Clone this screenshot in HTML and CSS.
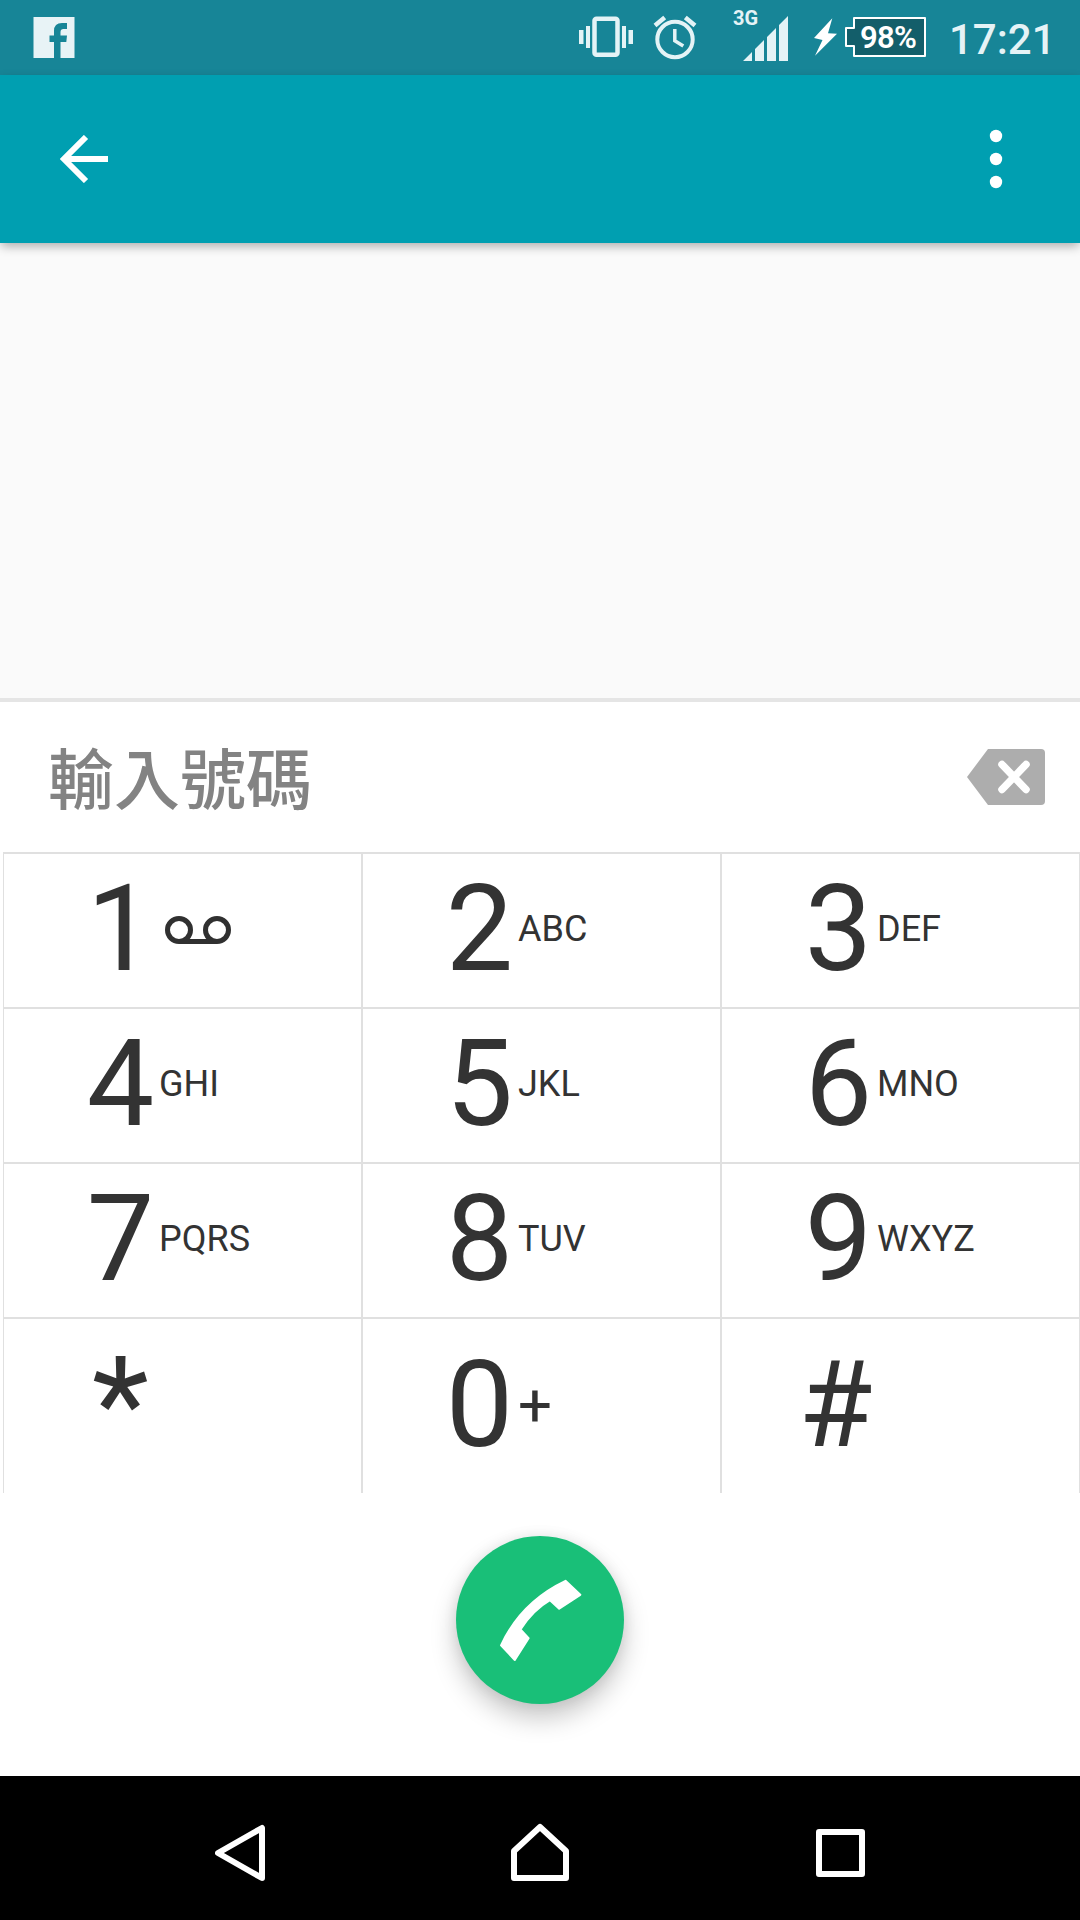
FILE: index.html
```html
<!DOCTYPE html>
<html lang="zh-Hant">
<head>
<meta charset="UTF-8">
<title>Dialer</title>
<link rel="stylesheet" href="styles.css">
</head>
<body>

<div class="statusbar">
  <svg class="facebook" width="42" height="75" viewBox="33 0 42 75">
    <path fill="#e8f3f6" d="M33.5 17H74.500V58H60.500V42H66.300L67 35.500H60.500V32Q60.500 29 63.500 29H67V23H62Q54 23 54 31V35.500H49.500V42H54V58H33.500Z"/>
  </svg>
  <svg class="vibrate" width="54" height="75" viewBox="579 0 54 75" fill="#e4f3f6">
    <rect x="579" y="30" width="4.500" height="14"/>
    <rect x="586" y="26" width="4" height="22"/>
    <rect x="594.500" y="18.800" width="23" height="36" rx="2" fill="none" stroke="#e4f3f6" stroke-width="4.500"/>
    <rect x="622" y="26" width="4" height="22"/>
    <rect x="628.500" y="30" width="4.500" height="14"/>
  </svg>
  <svg class="alarm" width="44" height="75" viewBox="653 0 44 75" fill="none" stroke="#e4f3f6" stroke-width="4">
    <circle cx="675" cy="39.500" r="17.700"/>
    <path d="M674.800 29V40.700L683.300 46" stroke-width="3.500"/>
    <path d="M655 25.500L664.700 17.500M695 25.500L685.300 17.500" stroke-width="4.500"/>
  </svg>
  <div class="network">3G</div>
  <svg class="signal" width="45" height="75" viewBox="743 0 45 75" fill="#e4f3f6">
    <path d="M743 61L752 52V61ZM755 61V49L764 40V61ZM767 61V37L776 28V61ZM779 61V25L788 16V61Z"/>
  </svg>
  <svg class="bolt" width="24" height="75" viewBox="814 0 24 75" fill="#fff">
    <path d="M832.300 18.300L814 38L822.500 40L815 55.800L837 33.800L828 33.300Z"/>
  </svg>
  <div class="battery">
    <svg width="82" height="75" viewBox="845 0 82 75">
      <path d="M854 18H925V56H854V46H846V28H854Z" fill="#135e6a" stroke="#fff" stroke-width="2" stroke-linejoin="round"/>
    </svg>
    <span class="percent">98%</span>
  </div>
  <div class="clock">17:21</div>
</div>

<div class="toolbar">
  <svg width="48" height="48" viewBox="0 0 48 48" fill="none" stroke="#fff" stroke-width="6">
    <path d="M26 2L4 24L26 46M4 24H48"/>
  </svg>
  <svg width="14" height="60" viewBox="0 0 14 60" fill="#fff">
    <circle cx="7" cy="7" r="6.200"/>
    <circle cx="7" cy="30" r="6.200"/>
    <circle cx="7" cy="53" r="6.200"/>
  </svg>
</div>

<div class="results"></div>

<div class="number">
  <span class="hint">輸入號碼</span>
  <svg width="78" height="56" viewBox="0 0 78 56">
    <path fill="#adadad" d="M21 0H74Q78 0 78 4V52Q78 56 74 56H21L0 28Z"/>
    <path d="M35 15.500L59 40.500M59 15.500L35 40.500" stroke="#fff" stroke-width="7.500" stroke-linecap="round"/>
  </svg>
</div>

<div class="keypad">
  <div class="key"><span class="digit">1</span><svg class="voicemail" width="66" height="28" viewBox="0 0 66 28" fill="none" stroke="#303030" stroke-width="5"><circle cx="14" cy="14" r="11.500"/><circle cx="52" cy="14" r="11.500"/><path d="M14 25.500H52"/></svg></div>
  <div class="key"><span class="digit">2</span><span class="letters">ABC</span></div>
  <div class="key"><span class="digit">3</span><span class="letters">DEF</span></div>
  <div class="key"><span class="digit">4</span><span class="letters">GHI</span></div>
  <div class="key"><span class="digit">5</span><span class="letters">JKL</span></div>
  <div class="key"><span class="digit">6</span><span class="letters">MNO</span></div>
  <div class="key"><span class="digit">7</span><span class="letters">PQRS</span></div>
  <div class="key"><span class="digit">8</span><span class="letters">TUV</span></div>
  <div class="key"><span class="digit">9</span><span class="letters">WXYZ</span></div>
  <div class="key"><span class="digit star">*</span></div>
  <div class="key"><span class="digit">0</span><span class="letters plus">+</span></div>
  <div class="key"><span class="digit hash">#</span></div>
</div>

<div class="actions">
  <div class="call">
    <svg width="168" height="168" viewBox="0 0 168 168" fill="#fff" stroke="#fff" stroke-width="2" stroke-linejoin="round">
      <path d="M109.500 44.800L124.300 58.800L103.200 72.700L94 64.200Q77 74 64.500 93.500L72.600 102.300L58.800 124L45 109.300Q65 66 109.500 44.800Z"/>
    </svg>
  </div>
</div>

<div class="navbar">
  <svg width="50" height="60" viewBox="0 0 50 60"><path d="M3 30L47 5V55Z"/></svg>
  <svg width="60" height="60" viewBox="0 0 60 60"><path d="M3 55V28L29 4L55 28V55Z"/></svg>
  <svg width="49" height="60" viewBox="0 0 49 60"><path d="M3 9H46V51H3Z"/></svg>
</div>

</body>
</html>
```
FILE: styles.css
```css
body { margin: 0; width: 1080px; height: 1920px; overflow: hidden;
       display: flex; flex-direction: column;
       background-color: #FFFFFF; color: #333333;
       font-family: Roboto, "Noto Sans CJK TC", sans-serif; }
svg { display: block; flex: none; }

.statusbar { height: 75px; flex: none; display: flex;
             background-color: #178597; color: #E5F3F6; }
.facebook { margin-left: 33px; }
.vibrate { margin-left: 504px; }
.alarm { margin-left: 20px; }
.network { margin-left: 36px; width: 10px; padding-top: 6px;
           font-size: 20px; line-height: 24px; font-weight: 700; }
.bolt { margin-left: 26px; }
.battery { margin-left: 7px; position: relative; }
.percent { position: absolute; left: 15px; top: 18px;
           font-size: 31px; line-height: 39px; font-weight: 600;
           letter-spacing: -0.7px; color: #FFFFFF; }
.clock { margin-left: 22px; padding-top: 15px;
         font-size: 42px; line-height: 50px; font-weight: 500; }

.toolbar { height: 168px; flex: none; box-sizing: border-box;
           padding: 0 77px 0 60px; z-index: 1;
           display: flex; align-items: center; justify-content: space-between;
           background-color: #009FB1;
           box-shadow: 0 4px 10px -1px rgba(0,0,0,0.32); }

.results { height: 459px; flex: none; box-sizing: border-box;
           background-color: #FAFAFA; border-bottom: 4px solid #E5E5E5; }

.number { height: 150px; flex: none; box-sizing: border-box;
          padding: 0 35px 0 48px;
          display: flex; align-items: center; justify-content: space-between; }
.hint { padding-top: 9px; font-size: 66px; line-height: 80px;
        font-weight: 500; color: #838383; }

.keypad { flex: none; margin-left: 3px; display: grid;
          grid-template-columns: 360px 359px 358px;
          grid-template-rows: 155px 155px 155px 174px;
          border-top: 2px solid #E0E0E0; }
.key { display: flex; align-items: center; box-sizing: border-box;
       padding-left: 83px; padding-bottom: 3px;
       border-right: 2px solid #E0E0E0; border-bottom: 2px solid #E0E0E0; }
.key:nth-child(3n+1) { border-left: 1px solid #E0E0E0; }
.key:nth-child(3n) { border-right-width: 1px; }
.key:nth-child(n+10) { border-bottom: none; padding-bottom: 2px; }
.digit { width: 67px; flex: none; display: flex; justify-content: center;
         font-size: 120px; line-height: 140px; }
.star { font-size: 132px; }
.hash { margin-left: -3px; }
.letters { margin-left: 5px; font-size: 36px; line-height: 42px; }
.plus { padding-top: 2px; font-size: 60px; }
.voicemail { margin-left: 11px; margin-top: 2px; }

.actions { flex: 1; display: flex; justify-content: center;
           padding-top: 43px; }
.call { width: 168px; height: 168px; border-radius: 50%;
        background-color: #19BF78;
        box-shadow: 0 14px 26px rgba(0,0,0,0.22), 0 0 14px rgba(0,0,0,0.08); }

.navbar { height: 144px; flex: none; box-sizing: border-box;
          padding: 10px 215px 0; background-color: #000000;
          display: flex; align-items: center; justify-content: space-between; }
.navbar path { fill: none; stroke: #FFFFFF; stroke-width: 6;
               stroke-linejoin: round; }
```
